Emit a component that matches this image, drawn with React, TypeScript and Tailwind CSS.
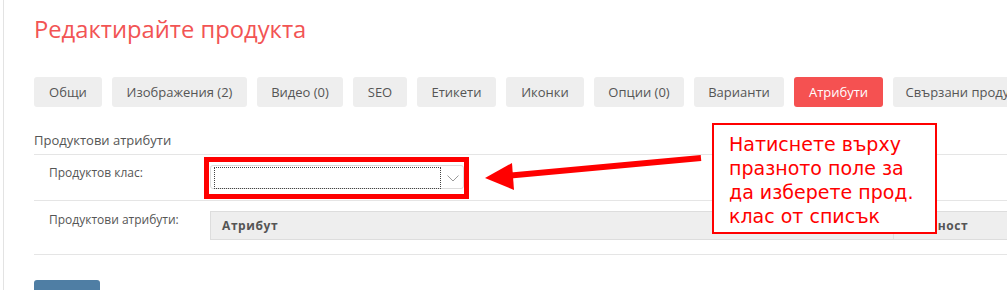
import React from "react";

const tabs = [
  { label: "Общи", w: "w-[68px]" },
  { label: "Изображения (2)", w: "w-[135px]" },
  { label: "Видео (0)", w: "w-[86px]" },
  { label: "SEO", w: "w-[54px]" },
  { label: "Етикети", w: "w-[79px]" },
  { label: "Иконки", w: "w-[78px]" },
  { label: "Опции (0)", w: "w-[90px]" },
  { label: "Варианти", w: "w-[90px]" },
  { label: "Атрибути", w: "w-[89px]", active: true },
  { label: "Свързани продукти", w: "w-[150px]" },
];

const calloutLines = [
  "Натиснете върху",
  "празното поле за",
  "да изберете прод.",
  "клас от списък",
];

const App: React.FC = () => {
  return (
    <div className="relative w-[1007px] h-[290px] overflow-hidden bg-white font-['Open_Sans',sans-serif] text-[#555]">
      <div className="ml-[3px] h-full w-[1300px] border-l border-[#e3e3e3] pl-[30px]">
        <h1 className="pt-[13px] text-[23.75px] leading-[32px] font-normal text-[#f25454]">
          Редактирайте продукта
        </h1>

        <div className="mt-[32px] flex gap-[10px]">
          {tabs.map((t) => (
            <div
              key={t.label}
              className={`${t.w} h-[30px] shrink-0 whitespace-nowrap rounded-[3px] text-center text-[13px] leading-[30px] ${
                t.active ? "bg-[#f55151] text-white" : "bg-[#eeeeee] text-[#555]"
              }`}
            >
              {t.label}
            </div>
          ))}
        </div>

        <div className="mt-[23px] border-b border-[#e5e5e5] pb-[4px] text-[13px] leading-[20px]">
          Продуктови атрибути
        </div>

        {/* product class row */}
        <div className="flex h-[46px] border-b border-[#e5e5e5]">
          <div className="mt-[8px] w-[176px] pl-[15px] text-[12px] leading-[20px]">
            Продуктов клас:
          </div>
          <div className="relative mt-[10px] h-[24px] w-[254px] rounded-[3px] border border-[#dcdcdc] bg-white">
            <div className="absolute left-[3px] top-[1px] h-[22px] w-[227px] border border-dotted border-[#444]" />
            <svg
              className="absolute left-[236px] top-[9px]"
              width="12"
              height="7"
              viewBox="0 0 12 7"
            >
              <polyline points="0.5,0.5 6,6 11.5,0.5" fill="none" stroke="#9a9a9a" strokeWidth="1" />
            </svg>
            <div className="absolute -left-[7px] -right-[6px] -top-[9px] -bottom-[11px] border-[5px] border-[#ff0000]" />
          </div>
        </div>

        {/* product attributes row */}
        <div className="flex h-[54px] border-b border-[#e5e5e5]">
          <div className="mt-[9px] w-[176px] pl-[15px] text-[12px] leading-[20px]">
            Продуктови атрибути:
          </div>
          <div className="mt-[10px] flex h-[29px] w-[1000px] border border-[#dddddd] bg-[#eeeeee] text-[12px] font-bold tracking-[0.6px] text-[#555]">
            <div className="flex w-[683px] items-center border-r border-[#dddddd] pl-[11px]">
              Атрибут
            </div>
            <div className="flex items-center pl-[11px]">Стойност</div>
          </div>
        </div>

        <div className="mt-[25px] h-[34px] w-[66px] rounded-[3px] bg-[#4f7ea4]" />
      </div>

      {/* annotation arrow */}
      <svg className="pointer-events-none absolute left-0 top-0" width="1007" height="290">
        <line x1="506" y1="176" x2="701" y2="158" stroke="#ff0000" strokeWidth="6" />
        <polygon points="485,178 512,163 514,190" fill="#ff0000" />
      </svg>

      {/* annotation callout */}
      <div className="absolute left-[712px] top-[123px] h-[111px] w-[225px] border-2 border-[#ff0000] bg-white pl-[15px] pt-[7px] font-['DejaVu_Sans',sans-serif] text-[19px] leading-[24px] text-[#ff0000]">
        {calloutLines.map((l) => (
          <div key={l} className="whitespace-nowrap">
            {l}
          </div>
        ))}
      </div>
    </div>
  );
};

export default App;
